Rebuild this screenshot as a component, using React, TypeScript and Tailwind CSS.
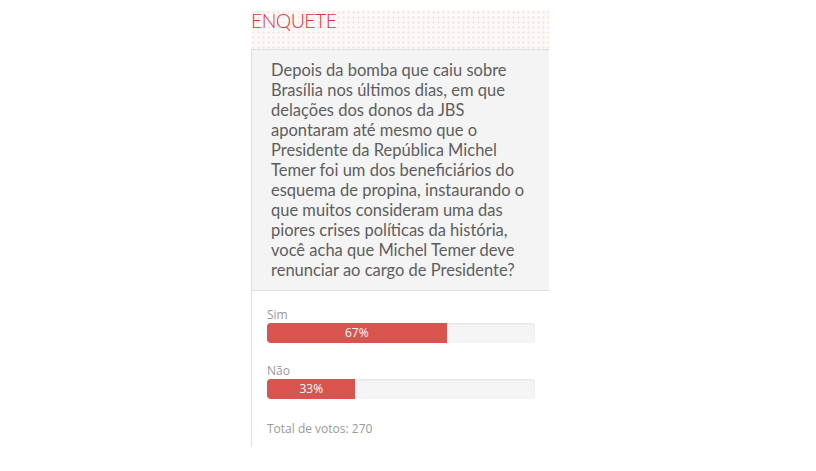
const lines = [
  'Depois da bomba que caiu sobre',
  'Brasília nos últimos dias, em que',
  'delações dos donos da JBS',
  'apontaram até mesmo que o',
  'Presidente da República Michel',
  'Temer foi um dos beneficiários do',
  'esquema de propina, instaurando o',
  'que muitos consideram uma das',
  'piores crises políticas da história,',
  'você acha que Michel Temer deve',
  'renunciar ao cargo de Presidente?',
];

const options = [
  { label: 'Sim', pct: 67 },
  { label: 'Não', pct: 33 },
];

export default function App() {
  return (
    <div className="min-h-[471px] bg-white pl-[251px] pt-[10px]">
      <div className="w-[298px]">
        {/* header with dotted pattern */}
        <div className="h-[39px] bg-[#fcf9f8] bg-[radial-gradient(#f4e8e5_1px,transparent_1.2px)] bg-[length:5px_5px]">
          <h2 className="font-['Lato',sans-serif] text-[19.5px] leading-[21px] font-light tracking-[-0.6px] text-[#e2333c]">
            ENQUETE
          </h2>
        </div>

        {/* question */}
        <div className="border-y border-l border-[#dedede] bg-[#f4f4f4] pb-[10px] pl-[19px] pr-[10px] pt-[10px]">
          <div className="font-['Lato',sans-serif] text-[16.5px] leading-[20px] text-[#5e5e5e]">
            {lines.map((l) => (
              <div key={l} className="whitespace-nowrap">
                {l}
              </div>
            ))}
          </div>
        </div>

        {/* results */}
        <div className="border-l border-[#e2e2e2] pb-[10px] pl-[15px] pr-[13px] pt-[16px] font-['Open_Sans',sans-serif]">
          {options.map((o) => (
            <div key={o.label} className="mb-[20px]">
              <div className="text-[12px] leading-[16px] text-[#999]">{o.label}</div>
              <div className="h-[20px] w-[268px] overflow-hidden rounded-[4px] bg-[#f5f5f5] shadow-[inset_0_1px_2px_rgba(0,0,0,0.08)]">
                <div
                  className="flex h-full items-center justify-center bg-[#d9534f] text-[12px] leading-[20px] text-white"
                  style={{ width: `${o.pct}%` }}
                >
                  {o.pct}%
                </div>
              </div>
            </div>
          ))}
          <div className="pt-[2px] text-[12px] leading-[16px] text-[#999]">Total de votos: 270</div>
        </div>
      </div>
    </div>
  );
}
